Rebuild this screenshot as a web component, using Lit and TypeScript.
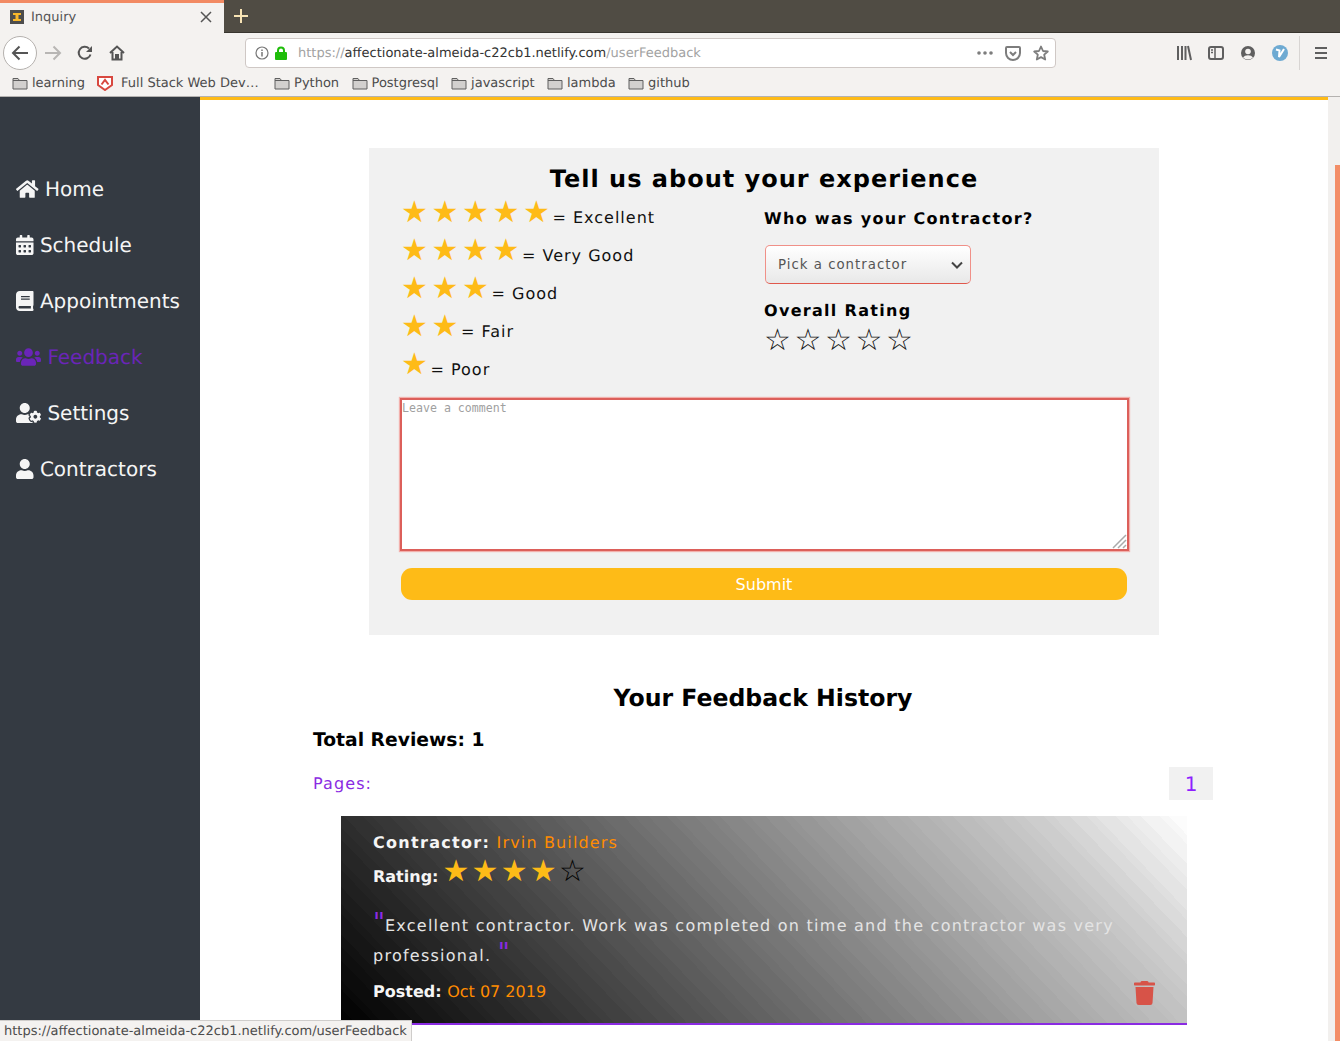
import {LitElement, css, html, svg, unsafeCSS} from 'lit'
import {customElement} from 'lit/decorators.js'

const fa = (w: number, d: string, cls = '') =>
  html`<svg class="fa ${cls}" viewBox="0 0 ${w} 512" style="width:${(w / 512) * 20}px"><path fill="currentColor" d=${d}></path></svg>`

const HOME = 'M280.37 148.26L96 300.11V464a16 16 0 0 0 16 16l112.06-.29a16 16 0 0 0 15.92-16V368a16 16 0 0 1 16-16h64a16 16 0 0 1 16 16v95.64a16 16 0 0 0 16 16.05L464 480a16 16 0 0 0 16-16V300L295.67 148.26a12.19 12.19 0 0 0-15.3 0zM571.6 251.47L488 182.56V44.05a12 12 0 0 0-12-12h-56a12 12 0 0 0-12 12v72.61L318.47 43a48 48 0 0 0-61 0L4.34 251.47a12 12 0 0 0-1.6 16.9l25.5 31A12 12 0 0 0 45.15 301l235.22-193.74a12.19 12.19 0 0 1 15.3 0L530.9 301a12 12 0 0 0 16.9-1.6l25.5-31a12 12 0 0 0-1.7-16.93z'
const CAL = 'M0 464c0 26.5 21.5 48 48 48h352c26.5 0 48-21.5 48-48V192H0v272zm320-196c0-6.6 5.4-12 12-12h40c6.6 0 12 5.4 12 12v40c0 6.6-5.4 12-12 12h-40c-6.6 0-12-5.4-12-12v-40zm0 128c0-6.6 5.4-12 12-12h40c6.6 0 12 5.4 12 12v40c0 6.6-5.4 12-12 12h-40c-6.6 0-12-5.4-12-12v-40zM192 268c0-6.6 5.4-12 12-12h40c6.6 0 12 5.4 12 12v40c0 6.6-5.4 12-12 12h-40c-6.6 0-12-5.4-12-12v-40zm0 128c0-6.6 5.4-12 12-12h40c6.6 0 12 5.4 12 12v40c0 6.6-5.4 12-12 12h-40c-6.6 0-12-5.4-12-12v-40zM64 268c0-6.6 5.4-12 12-12h40c6.6 0 12 5.4 12 12v40c0 6.6-5.4 12-12 12H76c-6.6 0-12-5.4-12-12v-40zm0 128c0-6.6 5.4-12 12-12h40c6.6 0 12 5.4 12 12v40c0 6.6-5.4 12-12 12H76c-6.6 0-12-5.4-12-12v-40zM400 64h-48V16c0-8.8-7.2-16-16-16h-32c-8.8 0-16 7.2-16 16v48H160V16c0-8.8-7.2-16-16-16h-32c-8.8 0-16 7.2-16 16v48H48C21.5 64 0 85.5 0 112v48h448v-48c0-26.5-21.5-48-48-48z'
const BOOK = 'M448 360V24c0-13.3-10.7-24-24-24H96C43 0 0 43 0 96v320c0 53 43 96 96 96h328c13.3 0 24-10.7 24-24v-16c0-7.5-3.5-14.3-8.9-18.7-4.2-15.4-4.2-59.3 0-74.7 5.4-4.3 8.9-11.1 8.9-18.6zM128 134c0-3.3 2.7-6 6-6h212c3.3 0 6 2.7 6 6v20c0 3.3-2.7 6-6 6H134c-3.3 0-6-2.7-6-6v-20zm0 64c0-3.3 2.7-6 6-6h212c3.3 0 6 2.7 6 6v20c0 3.3-2.7 6-6 6H134c-3.3 0-6-2.7-6-6v-20zm253.4 250H96c-17.7 0-32-14.3-32-32 0-17.6 14.4-32 32-32h285.4c-1.9 17.1-1.9 46.9 0 64z'
const USERS = 'M96 224c35.3 0 64-28.7 64-64s-28.7-64-64-64-64 28.7-64 64 28.7 64 64 64zm448 0c35.3 0 64-28.7 64-64s-28.7-64-64-64-64 28.7-64 64 28.7 64 64 64zm32 32h-64c-17.6 0-33.5 7.1-45.1 18.6 40.3 22.1 68.9 62 75.1 109.4h66c17.7 0 32-14.3 32-32v-32c0-35.3-28.7-64-64-64zm-256 0c61.9 0 112-50.1 112-112S381.9 32 320 32 208 82.1 208 144s50.1 112 112 112zm76.8 32h-8.3c-20.8 10-43.9 16-68.5 16s-47.6-6-68.5-16h-8.3C179.6 288 128 339.6 128 403.2V432c0 26.5 21.5 48 48 48h288c26.5 0 48-21.5 48-48v-28.8c0-63.6-51.6-115.2-115.2-115.2zm-223.7-13.4C161.5 263.1 145.6 256 128 256H64c-35.3 0-64 28.7-64 64v32c0 17.7 14.3 32 32 32h65.9c6.3-47.4 34.9-87.3 75.2-109.4z'
const USER_COG = 'M610.5 373.3c2.6-14.1 2.6-28.5 0-42.6l25.8-14.9c3-1.7 4.3-5.2 3.3-8.5-6.7-21.6-18.2-41.2-33.2-57.4-2.3-2.5-6-3.1-9-1.4l-25.8 14.9c-10.9-9.3-23.4-16.5-36.9-21.3v-29.8c0-3.4-2.4-6.4-5.7-7.1-22.3-5-45-4.8-66.2 0-3.3.7-5.7 3.7-5.7 7.1v29.8c-13.5 4.8-26 12-36.9 21.3l-25.8-14.9c-2.9-1.7-6.7-1.1-9 1.4-15 16.2-26.5 35.8-33.2 57.4-1 3.3.4 6.8 3.3 8.5l25.8 14.9c-2.6 14.1-2.6 28.5 0 42.6l-25.8 14.9c-3 1.7-4.3 5.2-3.3 8.5 6.7 21.6 18.2 41.1 33.2 57.4 2.3 2.5 6 3.1 9 1.4l25.8-14.9c10.9 9.3 23.4 16.5 36.9 21.3v29.8c0 3.4 2.4 6.4 5.7 7.1 22.3 5 45 4.8 66.2 0 3.3-.7 5.7-3.7 5.7-7.1v-29.8c13.5-4.8 26-12 36.9-21.3l25.8 14.9c2.9 1.7 6.7 1.1 9-1.4 15-16.2 26.5-35.8 33.2-57.4 1-3.3-.4-6.8-3.3-8.5l-25.8-14.9zM496 400.5c-26.8 0-48.5-21.8-48.5-48.5s21.8-48.5 48.5-48.5 48.5 21.8 48.5 48.5-21.7 48.5-48.5 48.5zM224 256c70.7 0 128-57.3 128-128S294.7 0 224 0 96 57.3 96 128s57.3 128 128 128zm201.2 226.5c-2.3-1.2-4.6-2.6-6.8-3.9l-7.9 4.6c-6 3.4-12.8 5.3-19.6 5.3-10.9 0-21.4-4.6-28.9-12.6-18.3-19.8-32.3-43.9-40.2-69.6-5.5-17.7 1.9-36.4 17.9-45.7l7.9-4.6c-.1-2.6-.1-5.2 0-7.8l-7.9-4.6c-16-9.2-23.4-28-17.9-45.7.9-2.9 2.2-5.8 3.2-8.7-3.8-.3-7.5-1.2-11.4-1.2h-16.7c-22.2 10.2-46.9 16-72.9 16s-50.6-5.8-72.9-16h-16.7C60.2 288 0 348.2 0 422.4V464c0 26.5 21.5 48 48 48h352c10.1 0 19.5-3.2 27.2-8.5-1.2-3.8-2-7.7-2-11.8v-9.2z'
const USER = 'M224 256c70.7 0 128-57.3 128-128S294.7 0 224 0 96 57.3 96 128s57.3 128 128 128zm89.6 32h-16.7c-22.2 10.2-46.9 16-72.9 16s-50.6-5.8-72.9-16h-16.7C60.2 288 0 348.2 0 422.4V464c0 26.5 21.5 48 48 48h352c26.5 0 48-21.5 48-48v-41.6c0-74.2-60.2-134.4-134.4-134.4z'
const TRASH = 'M432 32H312l-9.4-18.7A24 24 0 0 0 281.1 0H166.8a23.72 23.72 0 0 0-21.4 13.3L136 32H16A16 16 0 0 0 0 48v32a16 16 0 0 0 16 16h416a16 16 0 0 0 16-16V48a16 16 0 0 0-16-16zM53.2 467a48 48 0 0 0 47.9 45h245.8a48 48 0 0 0 47.9-45L416 128H32z'

const NAV = [
  {label: 'Home', w: 576, d: HOME},
  {label: 'Schedule', w: 448, d: CAL},
  {label: 'Appointments', w: 448, d: BOOK},
  {label: 'Feedback', w: 640, d: USERS, active: true},
  {label: 'Settings', w: 640, d: USER_COG},
  {label: 'Contractors', w: 448, d: USER},
]

const LEGEND = [
  {n: 5, text: 'Excellent'},
  {n: 4, text: 'Very Good'},
  {n: 3, text: 'Good'},
  {n: 2, text: 'Fair'},
  {n: 1, text: 'Poor'},
]

const BOOKMARKS = ['Python', 'Postgresql', 'javascript', 'lambda', 'github']

const folder = html`<svg class="folder" viewBox="0 0 16 16">
  <path d="M1 3.500h5l1.500 2H15v8.500H1z" fill="#d2d0ce" stroke="#5f5f5f" stroke-width="1"></path>
  <path d="M1 5.500h14" stroke="#5f5f5f" stroke-width="1"></path>
</svg>`

const chromeIcon = (w: number, h: number, body: unknown) =>
  html`<svg width=${w} height=${h} viewBox="0 0 ${w} ${h}">${body}</svg>`

// the card gradient shows faint uneven banding in the reference, so step it with uneven widths
const bands = 72
const widths = Array.from({length: bands}, (_, i) => 1 + 0.4 * Math.sin(i * 2.4))
const totalWidth = widths.reduce((a, b) => a + b, 0)
let pos = 0
const stops = widths
  .map(w => {
    const from = pos
    pos += w / totalWidth
    const t = (from + pos) / 2
    // stays a little under linear, then climbs to white in the corner
    const v = t < 0.86 ? t * 0.94 : 0.808 + ((t - 0.86) / 0.14) * 0.192
    const g = Math.round(v * 255)
    return `rgb(${g},${g},${g}) ${from * 100}% ${pos * 100}%`
  })
  .join(',')

@customElement('app-root')
export class AppRoot extends LitElement {
  static styles = css`
    * {
      box-sizing: border-box;
    }

    :host {
      display: flex;
      flex-direction: column;
      position: relative;
      width: 1340px;
      height: 1041px;
      overflow: hidden;
      font-family: 'DejaVu Sans', sans-serif;
      text-rendering: geometricPrecision;
      background: #fff;
    }

    .tabbar {
      display: flex;
      height: 33px;
      flex: none;
      background: #504c44;
      border-bottom: 1px solid #38352f;
    }
    .tab {
      display: flex;
      align-items: center;
      width: 224px;
      height: 33px;
      padding: 0 11px 2px 10px;
      background: #f4f2f0;
      border-top: 3px solid #f28a63;
      color: #555;
      font-size: 13px;
    }
    .tab .title {
      flex: 1;
      margin-left: 7px;
    }
    .newtab {
      display: flex;
      align-items: center;
      margin-left: 9px;
    }

    .navbar {
      display: flex;
      align-items: center;
      height: 38px;
      flex: none;
      padding: 2px 0 0 3px;
      background: #f4f2f0;
    }
    .back {
      display: flex;
      align-items: center;
      justify-content: center;
      width: 34px;
      height: 34px;
      border-radius: 50%;
      background: #fff;
      border: 1px solid #b5b1ae;
    }
    .navicon {
      display: flex;
      justify-content: center;
      width: 32px;
    }
    .urlbar {
      display: flex;
      align-items: center;
      width: 811px;
      height: 30px;
      margin-left: 112px;
      padding: 0 6px 0 9px;
      background: #fff;
      border: 1px solid #cfc8c5;
      border-radius: 4px;
      font-size: 13px;
      color: #a2a2a2;
    }
    .url {
      flex: 1;
      margin-left: 11px;
      white-space: nowrap;
    }
    .url b {
      font-weight: 400;
      color: #333;
    }
    .urlicons {
      display: flex;
      align-items: center;
      gap: 12px;
    }
    .tools {
      display: flex;
      align-items: center;
      margin-left: 120px;
      gap: 16px;
    }
    .divider {
      width: 1px;
      height: 34px;
      margin: 0 15px 0 11px;
      background: #d8d5d3;
    }

    .bookmarks {
      display: flex;
      align-items: center;
      height: 26px;
      flex: none;
      padding: 0 0 1px 12px;
      background: #f4f2f0;
      border-bottom: 1px solid #b4b2b0;
      font-size: 13px;
      color: #4c4c4c;
      white-space: nowrap;
    }
    .bm {
      display: flex;
      align-items: center;
      gap: 4px;
      margin-right: 12.4px;
    }
    .bm.shield {
      gap: 8px;
      width: 165px;
      margin-right: 12px;
    }
    .bm.learning {
      margin-right: 12px;
    }
    .folder {
      width: 16px;
      height: 16px;
    }

    .viewport {
      display: flex;
      flex: 1;
      min-height: 0;
    }

    .sidebar {
      width: 200px;
      flex: none;
      padding-top: 64px;
      background: #343a42;
    }
    .sidebar a {
      display: flex;
      align-items: center;
      gap: 6.4px;
      height: 56px;
      padding-left: 16px;
      color: #f5f5f5;
      font-size: 20px;
      white-space: nowrap;
    }
    .sidebar a.active {
      color: #6a25b8;
    }
    .fa {
      height: 20px;
      flex: none;
    }

    .main {
      flex: 1;
      min-width: 0;
      border-top: 3px solid #febb17;
      background: #fff;
      overflow: hidden;
    }

    .panel {
      width: 790px;
      height: 487px;
      margin: 48px auto 0;
      padding: 0 32px;
      background: #f1f1f1;
    }
    h1 {
      margin: 0;
      padding-top: 15px;
      text-align: center;
      font-size: 24px;
      line-height: 32px;
      letter-spacing: 1px;
      color: #000;
    }
    .cols {
      display: grid;
      grid-template-columns: 1fr 1fr;
    }
    .legend-row {
      display: flex;
      align-items: baseline;
      height: 38px;
      line-height: 38px;
      font-size: 16px;
      letter-spacing: 1px;
      color: #111;
    }
    .stars {
      font-size: 30px;
      letter-spacing: 3.6px;
      color: #febb17;
      transform: translateY(-1px);
    }
    .eq {
      margin-left: -1px;
      white-space: pre;
    }
    .right h3 {
      margin: 0;
      font-size: 16px;
      letter-spacing: 1.3px;
      color: #000;
    }
    .who {
      padding-top: 14px;
      line-height: 20px;
    }
    .select {
      position: relative;
      width: 206px;
      height: 39px;
      margin: 16px 0 17px 1px;
    }
    .select select {
      appearance: none;
      width: 100%;
      height: 100%;
      padding: 0 12px;
      border: 1px solid #f09088;
      border-bottom-color: #e0584c;
      border-radius: 5px;
      background: linear-gradient(#fff, #e8e8e8);
      font-family: inherit;
      font-size: 13.33px;
      letter-spacing: 1px;
      color: #555;
    }
    .select svg {
      position: absolute;
      right: 8px;
      top: 16px;
    }
    .right .rating {
      line-height: 20px;
    }
    .empty {
      display: block;
      margin-top: 1px;
      font-size: 30px;
      line-height: 38px;
      letter-spacing: 3.6px;
      color: #111;
    }

    .comment {
      position: relative;
      width: 729px;
      height: 153px;
      margin: 13px 0 0 -1px;
    }
    .comment textarea {
      display: block;
      width: 100%;
      height: 100%;
      padding: 1px 0;
      border: 2px solid #dc5f5a;
      box-shadow: 0 0 1px 1px #f2b0ac;
      outline: none;
      resize: none;
      background: #fff;
      font-family: 'DejaVu Sans Mono', monospace;
      font-size: 11.6px;
    }
    .comment textarea::placeholder {
      color: #a0a0a0;
      opacity: 1;
    }
    .comment svg {
      position: absolute;
      right: 2px;
      bottom: 2px;
    }
    .submit {
      display: block;
      width: 726px;
      height: 32px;
      margin: 17px 0 0;
      border: 0;
      border-radius: 11px;
      background: #febb17;
      color: #fff;
      font-family: inherit;
      font-size: 16px;
    }

    .history {
      width: 900px;
      margin-left: 113px;
    }
    h2 {
      margin: 46px 0 0;
      text-align: center;
      font-size: 23.6px;
      line-height: 34px;
      color: #000;
    }
    .total {
      margin: 13px 0 0;
      font-size: 18.72px;
      font-weight: 700;
      line-height: 26px;
      color: #000;
    }
    .pages {
      display: flex;
      align-items: center;
      justify-content: space-between;
      height: 33px;
      margin-top: 13px;
      font-size: 16px;
      letter-spacing: 1.1px;
      color: #8a2be2;
    }
    .pagenum {
      display: flex;
      align-items: center;
      justify-content: center;
      width: 44px;
      height: 33px;
      background: #f1f1f1;
      font-size: 20px;
      letter-spacing: 0;
      color: #8f1fff;
    }

    .card {
      position: relative;
      width: 846px;
      height: 209px;
      margin: 16px 0 0 28px;
      padding: 16px 32px 0;
      border-bottom: 2px solid #8a2be2;
      background: linear-gradient(46deg, ${unsafeCSS(stops)});
      font-size: 16px;
      color: #f5f5f5;
    }
    .card .line {
      line-height: 22px;
    }
    .contractor {
      letter-spacing: 1.3px;
    }
    .orange {
      font-weight: 400;
      color: #ff8c00;
    }
    .contractor .orange {
      letter-spacing: 1.15px;
    }
    .rating-line {
      display: flex;
      align-items: baseline;
      height: 37px;
      line-height: 37px;
      font-weight: 700;
    }
    .card .stars {
      margin: 0 0 0 4px;
      font-size: 30px;
      letter-spacing: 2.2px;
      transform: translateY(-1px);
    }
    .card .none {
      color: #000;
    }
    .quote {
      margin: 20px 0 0;
      line-height: 30px;
      letter-spacing: 1.25px;
      color: #e4e4e4;
    }
    .quote span {
      color: #8a2be2;
      font-size: 26px;
      line-height: 0;
      letter-spacing: 0;
    }
    .posted {
      margin-top: 10px;
      font-weight: 700;
    }
    .trash {
      position: absolute;
      right: 32px;
      bottom: 18px;
      color: #d75348;
      width: 21px;
      height: 24px;
    }

    .scrollbar {
      position: relative;
      width: 12px;
      flex: none;
      background: #f2f0ee;
    }
    .thumb {
      position: absolute;
      top: 68px;
      right: 0;
      bottom: 0;
      width: 5px;
      background: #f38d66;
    }

    .status {
      position: absolute;
      left: 0;
      bottom: 0;
      height: 21px;
      padding: 0 4px;
      line-height: 21px;
      background: #f4f2f0;
      border: 1px solid #cfcdcb;
      border-width: 1px 1px 0 0;
      font-size: 13px;
      color: #4c4c4c;
      white-space: nowrap;
    }
  `

  render() {
    const url = html`https://<b>affectionate-almeida-c22cb1.netlify.com</b>/userFeedback`
    return html`
      <div class="tabbar">
        <div class="tab">
          ${chromeIcon(14, 14, svg`<rect width="14" height="14" fill="#4d4d4d"></rect>
            <path d="M3 3h8v2H8.500v4H11v2H3V9h2.500V5H3z" fill="#f9b82b"></path>`)}
          <span class="title">Inquiry</span>
          ${chromeIcon(14, 14, svg`<path d="M2 2l10 10M12 2L2 12" stroke="#555" stroke-width="1.500"></path>`)}
        </div>
        <div class="newtab">
          ${chromeIcon(16, 16, svg`<path d="M8 1v14M1 8h14" stroke="#f7e3b4" stroke-width="2"></path>`)}
        </div>
      </div>

      <div class="navbar">
        <div class="back">
          ${chromeIcon(18, 16, svg`<path d="M17 8H2M8.500 1.500L2 8l6.500 6.500" fill="none" stroke="#555" stroke-width="2"></path>`)}
        </div>
        <div class="navicon">
          ${chromeIcon(18, 16, svg`<path d="M1 8h15M9.500 1.500L16 8l-6.500 6.500" fill="none" stroke="#b8b6b4" stroke-width="2"></path>`)}
        </div>
        <div class="navicon">
          ${chromeIcon(16, 16, svg`<path d="M13.500 9.500A6 6 0 1 1 12 3.500" fill="none" stroke="#555" stroke-width="2"></path>
            <path d="M15 1v6H9z" fill="#555"></path>`)}
        </div>
        <div class="navicon">
          ${chromeIcon(16, 16, svg`<path d="M1 8l7-6.500L15 8M3.500 7v7.500h3.500V10h2v4.500h3.500V7" fill="none" stroke="#555" stroke-width="2"></path>`)}
        </div>
        <div class="urlbar">
          ${chromeIcon(14, 14, svg`<circle cx="7" cy="7" r="6" fill="none" stroke="#777" stroke-width="1.200"></circle>
            <path d="M7 6v4.500M7 3.500v1.500" stroke="#777" stroke-width="1.500"></path>`)}
          <span style="width:6px"></span>
          ${chromeIcon(12, 14, svg`<path d="M3 7V4.500a3 3 0 0 1 6 0V7" fill="none" stroke="#1fbd0a" stroke-width="2"></path>
            <rect y="6" width="12" height="8" rx="1" fill="#1fbd0a"></rect>`)}
          <span class="url">${url}</span>
          <div class="urlicons">
            ${chromeIcon(16, 4, svg`<circle cx="2" cy="2" r="1.800" fill="#7d7d7d"></circle>
              <circle cx="8" cy="2" r="1.800" fill="#7d7d7d"></circle>
              <circle cx="14" cy="2" r="1.800" fill="#7d7d7d"></circle>`)}
            ${chromeIcon(16, 15, svg`<path d="M1 2a1 1 0 0 1 1-1h12a1 1 0 0 1 1 1v5a7 7 0 0 1-14 0z" fill="none" stroke="#7d7d7d" stroke-width="2"></path>
              <path d="M5 6l3 3 3-3" fill="none" stroke="#7d7d7d" stroke-width="2"></path>`)}
            ${chromeIcon(16, 16, svg`<path d="M8 1.500l2 4.500 4.800.5-3.600 3.200 1 4.800L8 12.100l-4.200 2.400 1-4.800L1.200 6.500 6 6z" fill="none" stroke="#7d7d7d" stroke-width="1.800" stroke-linejoin="round"></path>`)}
          </div>
        </div>
        <div class="tools">
          ${chromeIcon(16, 16, svg`<path d="M2 1v14M6 1v14M9.500 1v14M12 1l3 14" stroke="#5f5f5f" stroke-width="2" fill="none"></path>`)}
          ${chromeIcon(16, 14, svg`<rect x="1" y="1" width="14" height="12" rx="2" fill="none" stroke="#5f5f5f" stroke-width="2"></rect>
            <path d="M7 1v12M3 4h2M3 6.500h2" stroke="#5f5f5f" stroke-width="1.500"></path>`)}
          ${chromeIcon(16, 16, svg`<circle cx="8" cy="8" r="7" fill="#5f5f5f"></circle>
            <circle cx="8" cy="6.500" r="2.800" fill="#f4f2f0"></circle>
            <path d="M3 12.500a5.500 4 0 0 1 10 0 7 7 0 0 1-10 0z" fill="#f4f2f0"></path>`)}
          ${chromeIcon(16, 16, svg`<circle cx="8" cy="8" r="8" fill="#6eaad2"></circle>
            <path d="M4 4.500l3.500 1L7 12l5-8" fill="none" stroke="#fff" stroke-width="2"></path>`)}
        </div>
        <div class="divider"></div>
        ${chromeIcon(12, 12, svg`<path d="M0 1h12M0 6h12M0 11h12" stroke="#5f5f5f" stroke-width="2"></path>`)}
      </div>

      <div class="bookmarks">
        <div class="bm learning">${folder}<span>learning</span></div>
        <div class="bm shield">
          ${chromeIcon(16, 16, svg`<path d="M1 2h14v8l-7 5-7-5z" fill="#fff" stroke="#d8483f" stroke-width="2"></path>
            <path d="M4.500 9.500L8 5l3.500 4.500" fill="none" stroke="#d8483f" stroke-width="2"></path>`)}
          <span>Full Stack Web Dev…</span>
        </div>
        ${BOOKMARKS.map(b => html`<div class="bm">${folder}<span>${b}</span></div>`)}
      </div>

      <div class="viewport">
        <nav class="sidebar">
          ${NAV.map(
            n => html`<a class=${n.active ? 'active' : ''}>${fa(n.w, n.d)}<span>${n.label}</span></a>`
          )}
        </nav>

        <main class="main">
          <section class="panel">
            <h1>Tell us about your experience</h1>
            <div class="cols">
              <div class="legend">
                ${LEGEND.map(
                  l => html`<div class="legend-row">
                    <span class="stars">${'★'.repeat(l.n)}</span><span class="eq">= ${l.text}</span>
                  </div>`
                )}
              </div>
              <div class="right">
                <h3 class="who">Who was your Contractor?</h3>
                <div class="select">
                  <select><option>Pick a contractor</option></select>
                  ${chromeIcon(12, 8, svg`<path d="M1 1.500l5 5 5-5" fill="none" stroke="#444" stroke-width="2"></path>`)}
                </div>
                <h3 class="rating">Overall Rating</h3>
                <span class="empty">☆☆☆☆☆</span>
              </div>
            </div>
            <div class="comment">
              <textarea placeholder="Leave a comment"></textarea>
              ${chromeIcon(15, 15, svg`<path d="M1 14L14 1M6 14l8-8M11 14l3-3" stroke="#aaa" stroke-width="1.500"></path>`)}
            </div>
            <button class="submit">Submit</button>
          </section>

          <section class="history">
            <h2>Your Feedback History</h2>
            <div class="total">Total Reviews: 1</div>
            <div class="pages"><span>Pages:</span><span class="pagenum">1</span></div>
            <article class="card">
              <div class="line contractor"><b>Contractor:</b> <span class="orange">Irvin Builders</span></div>
              <div class="rating-line">
                <span>Rating:</span><span class="stars">★★★★<span class="none">☆</span></span>
              </div>
              <p class="quote">
                <span>"</span>Excellent contractor. Work was completed on time and the contractor was very professional.
                <span>"</span>
              </p>
              <div class="line posted">Posted: <span class="orange">Oct 07 2019</span></div>
              <svg class="trash" viewBox="0 0 448 512"><path fill="currentColor" d=${TRASH}></path></svg>
            </article>
          </section>
        </main>

        <div class="scrollbar"><div class="thumb"></div></div>
      </div>

      <div class="status">https://affectionate-almeida-c22cb1.netlify.com/userFeedback</div>
    `
  }
}
